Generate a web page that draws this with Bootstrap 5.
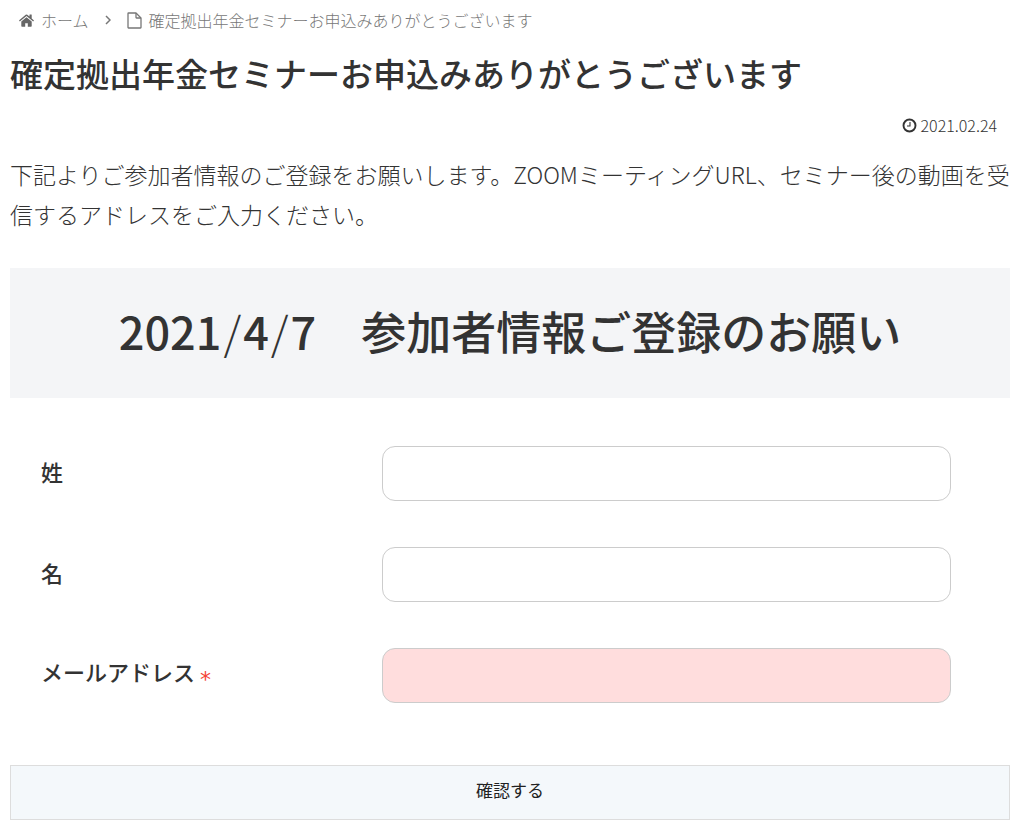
<!DOCTYPE html>
<html lang="ja">
<head>
<meta charset="utf-8">
<meta name="viewport" content="width=device-width, initial-scale=1">
<title>確定拠出年金セミナーお申込みありがとうございます</title>
<link href="https://cdn.jsdelivr.net/npm/bootstrap@5.3.0/dist/css/bootstrap.min.css" rel="stylesheet">
<style>
body{font-family:"Noto Sans CJK JP",sans-serif;color:#333;background:#fff}
.page{padding:8px 8px 0 10px}
.crumbs{font-size:16px;line-height:24px;font-weight:300;color:#777;padding-left:9px}
.crumbs a{color:inherit;text-decoration:none;gap:7px}
.crumbs svg,.post-date svg{flex:none}
.page-title{font-size:33px;line-height:44px;font-weight:500;margin:19px 0 18px}
.post-date{font-size:16px;line-height:24px;font-weight:300;gap:4px;padding-right:13px}
.intro{font-size:23px;line-height:40px;font-weight:300;margin:17px 0 34px}
.form-head{background:#f4f5f7;font-size:45px;line-height:67px;font-weight:500;padding:29px 0 34px;margin:0}
.form-head .slash{font-weight:300;padding:0 2px}
.form-rows{padding:48px 59px 62px 31px;gap:46px}
.form-line{display:grid;grid-template-columns:3fr 5fr;align-items:center}
.form-line label{font-size:22px;line-height:32px;font-weight:500;padding-bottom:5px}
.form-line .form-control{height:55px;border:1px solid #ccc;border-radius:13px}
.form-line .needed{background:#fdd}
.star{color:#f44336;font-family:"DejaVu Sans",sans-serif;font-size:22px;line-height:1;vertical-align:-6px}
.confirm{background:#f4f8fb;border:1px solid #ddd;border-radius:0;height:55px;font-size:17px;color:#222;padding:4px 12px 9px}
</style>
</head>
<body>
<main class="page container-fluid">
<nav class="crumbs d-flex align-items-center" aria-label="パンくずリスト">
<a href="#" class="d-flex align-items-center"><svg width="15" height="13" viewBox="0 0 15 13" fill="#666" aria-hidden="true"><path d="M7.500 3.300 2.300 7.600V12q0 .7.700.7h3.200V9.200h2.600v3.500H12q.7 0 .7-.7V7.600z"/><path d="M14.800 6.300 12.700 4.500V.8q0-.3-.3-.3h-1.600q-.3 0-.3.300v1.800L8.300.7q-.8-.6-1.600 0L.2 6.300q-.2.200 0 .4l.5.600q.200.200.4 0L7.500 2l6.400 5.300q.200.200.4 0l.500-.600q.200-.200 0-.400z"/></svg>ホーム</a>
<svg class="mx-3" width="6" height="10" viewBox="0 0 6 10" fill="none" stroke="#777" stroke-width="1.500" aria-hidden="true"><path d="M1 1l4 4-4 4"/></svg>
<a href="#" class="d-flex align-items-center"><svg width="15" height="17" viewBox="0 0 15 17" fill="none" stroke="#777" stroke-width="1.300" stroke-linejoin="round" aria-hidden="true"><path d="M9 1H1.500Q1 1 1 1.500v14q0 .5.500.5h12q.5 0 .5-.5V6z"/><path d="M9 1v4.500q0 .5.500.5H14"/></svg>確定拠出年金セミナーお申込みありがとうございます</a>
</nav>
<h1 class="page-title">確定拠出年金セミナーお申込みありがとうございます</h1>
<div class="post-date d-flex justify-content-end align-items-center"><svg width="15" height="15" viewBox="0 0 15 15" fill="none" stroke="#333" aria-hidden="true"><circle cx="7.500" cy="7.500" r="6" stroke-width="1.900"/><path d="M8 4v4H5" stroke-width="1.100"/></svg><time datetime="2021-02-24">2021.02.24</time></div>
<p class="intro">下記よりご参加者情報のご登録をお願いします。ZOOMミーティングURL、セミナー後の動画を受信するアドレスをご入力ください。</p>
<h2 class="form-head text-center">2021<span class="slash">/</span>4<span class="slash">/</span>7　参加者情報ご登録のお願い</h2>
<form>
<div class="form-rows d-flex flex-column">
<div class="form-line"><label for="family-name">姓</label><input type="text" id="family-name" class="form-control"></div>
<div class="form-line"><label for="given-name">名</label><input type="text" id="given-name" class="form-control"></div>
<div class="form-line"><label for="email">メールアドレス <span class="star">*</span></label><input type="email" id="email" class="form-control needed" required></div>
</div>
<button type="submit" class="btn confirm w-100">確認する</button>
</form>
</main>
<script src="https://cdn.jsdelivr.net/npm/bootstrap@5.3.0/dist/js/bootstrap.bundle.min.js"></script>
</body>
</html>
